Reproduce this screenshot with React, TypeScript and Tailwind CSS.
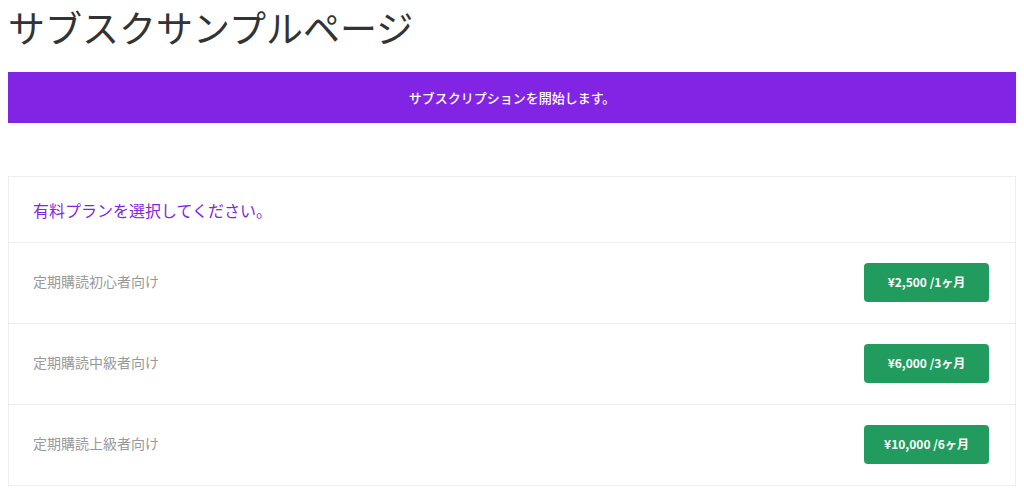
const PLANS = [
  { name: "定期購読初心者向け", price: "¥2,500 /1ヶ月" },
  { name: "定期購読中級者向け", price: "¥6,000 /3ヶ月" },
  { name: "定期購読上級者向け", price: "¥10,000 /6ヶ月" },
];

const font = "font-['Noto_Sans_CJK_JP','Noto_Sans',sans-serif]";

export default function App() {
  return (
    <div className={`min-h-screen bg-white px-2 ${font}`}>
      <h1 className="text-[37px] leading-[54px] font-normal text-[#333] mb-[18px]">
        サブスクサンプルページ
      </h1>

      <div className="h-[51px] bg-[#8224e3] flex items-center justify-center">
        <span className="text-white text-[13px] font-medium">
          サブスクリプションを開始します。
        </span>
      </div>

      <div className="mt-[53px] border border-[#eeeeee]">
        <div className="h-[65px] flex items-center px-6">
          <span className="text-[16px] text-[#8224e3]">有料プランを選択してください。</span>
        </div>
        {PLANS.map((plan) => (
          <div
            key={plan.name}
            className="h-[81px] border-t border-[#eeeeee] flex items-center justify-between pl-6 pr-[26px]"
          >
            <span className="text-[14px] text-[#999] -mt-[3px]">{plan.name}</span>
            <button className="w-[125px] h-[39px] -mt-[2px] rounded bg-[#229b5f] text-white text-[12px] font-bold">
              {plan.price}
            </button>
          </div>
        ))}
      </div>
    </div>
  );
}
